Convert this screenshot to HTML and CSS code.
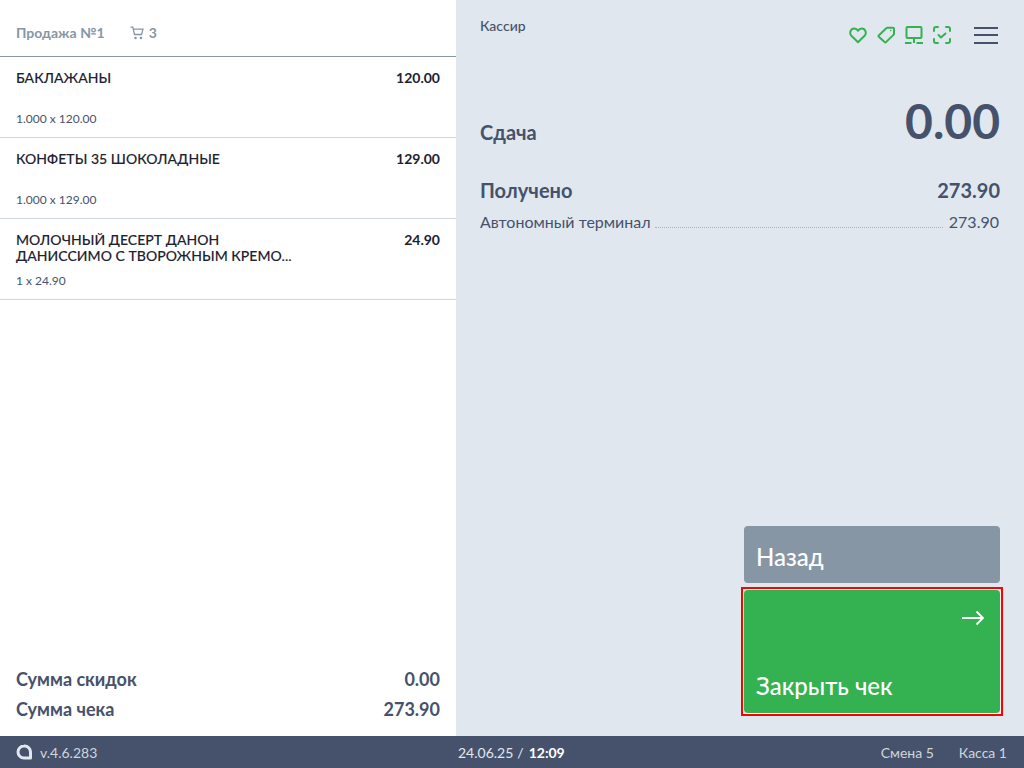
FILE: index.html
```html
<!DOCTYPE html>
<html lang="ru">
<head>
<meta charset="utf-8">
<title>Касса</title>
<link rel="stylesheet" href="styles.css">
</head>
<body>
<div class="app">
  <main class="main">
    <section class="left">
      <header class="sale-head">
        <span>Продажа №1</span>
        <span class="cart">
          <svg width="15" height="14" viewBox="0 0 15 14" fill="none" stroke="#8796a5" stroke-width="1.300"><path d="M.5 1.200h2.300l1.700 7.300h7l1.500-5.300H3.800"/><circle cx="5.500" cy="12" r="1.300" fill="#8796a5" stroke="none"/><circle cx="11" cy="12" r="1.300" fill="#8796a5" stroke="none"/></svg>
          3
        </span>
      </header>
      <div class="items">
        <article class="item">
          <div class="item-top"><div class="item-name">БАКЛАЖАНЫ</div><div class="item-price">120.00</div></div>
          <div class="item-qty">1.000 x 120.00</div>
        </article>
        <article class="item">
          <div class="item-top"><div class="item-name">КОНФЕТЫ 35 ШОКОЛАДНЫЕ</div><div class="item-price">129.00</div></div>
          <div class="item-qty">1.000 x 129.00</div>
        </article>
        <article class="item">
          <div class="item-top"><div class="item-name">МОЛОЧНЫЙ ДЕСЕРТ ДАНОН ДАНИССИМО С ТВОРОЖНЫМ КРЕМО...</div><div class="item-price">24.90</div></div>
          <div class="item-qty">1 x 24.90</div>
        </article>
      </div>
      <div class="totals">
        <div class="total-row"><span>Сумма скидок</span><span>0.00</span></div>
        <div class="total-row"><span>Сумма чека</span><span>273.90</span></div>
      </div>
    </section>
    <section class="right">
      <div class="top-row">
        <div class="cashier">Кассир</div>
        <div class="tools">
          <svg class="tool" width="18" height="18" viewBox="0 0 18 18" fill="none" stroke="#34b252" stroke-width="2" stroke-linejoin="round"><path d="M9 16.200 2.400 9.800C0 7.300 1.600 2.400 5.200 2.400 6.900 2.400 8.200 3.300 9 4.800 9.800 3.300 11.100 2.400 12.800 2.400 16.400 2.400 18 7.300 15.600 9.800z"/></svg>
          <svg class="tool" width="18" height="18" viewBox="0 0 18 18" fill="none" stroke="#34b252" stroke-width="2" stroke-linejoin="round"><path d="M1.500 9.800 9.500 2a1 1 0 0 1 .7-.3h5.800a1 1 0 0 1 1 1v5.200a1 1 0 0 1-.3.7l-7.700 7.500a1 1 0 0 1-1.400 0l-5.800-5.300a1.300 1.300 0 0 1-.3-1z"/><circle cx="13.800" cy="4.500" r=".8" fill="#34b252" stroke="none"/></svg>
          <svg class="tool" width="18" height="18" viewBox="0 0 18 18" fill="none" stroke="#34b252" stroke-width="2"><rect x="1.500" y="1" width="15" height="11" rx="1"/><path d="M9 12v5M0 17h6.500M11.500 17H18"/></svg>
          <svg class="tool" width="18" height="18" viewBox="0 0 18 18" fill="none" stroke="#34b252" stroke-width="2" stroke-linecap="round" stroke-linejoin="round"><path d="M1 5V3a2 2 0 0 1 2-2h2M13 1h2a2 2 0 0 1 2 2v2M17 13v2a2 2 0 0 1-2 2h-2M5 17H3a2 2 0 0 1-2-2v-2M5.500 9l2.500 2.500 4.500-4"/></svg>
          <div class="burger"><span></span><span></span><span></span></div>
        </div>
      </div>
      <div class="change-row"><span class="change-label">Сдача</span><span class="change-value">0.00</span></div>
      <div class="received-row"><span>Получено</span><span>273.90</span></div>
      <div class="pay-row"><span>Автономный терминал</span><span class="dots"></span><span>273.90</span></div>
      <div class="actions">
        <button class="btn btn-back" type="button">Назад</button>
        <button class="btn btn-close" type="button">
          <svg class="arrow" width="24" height="16" viewBox="0 0 24 16" fill="none" stroke="#fff" stroke-width="1.800"><path d="M1 8h21M15.500 1.500 22 8l-6.500 6.500"/></svg>
          <span>Закрыть чек</span>
        </button>
      </div>
    </section>
  </main>
  <footer class="bar">
    <div class="bar-left">
      <svg width="16" height="16" viewBox="0 0 16 16" fill="none" stroke="#e0e7ef" stroke-width="3"><path d="M8 2a6 6 0 1 0 0 12h6.500V8A6 6 0 0 0 8 2z" stroke-linejoin="round"/></svg>
      <span>v.4.6.283</span>
    </div>
    <div class="bar-center">24.06.25<span class="slash">/</span><b>12:09</b></div>
    <div class="bar-right"><span>Смена 5</span><span>Касса 1</span></div>
  </footer>
</div>
</body>
</html>
```
FILE: styles.css
```css
* { box-sizing: border-box; }
html, body { margin: 0; height: 100%; }
body { font-family: Lato, "Noto Sans", sans-serif; color: #46526b; }
.app { width: 1024px; height: 768px; display: flex; flex-direction: column; overflow: hidden; }
.main { flex: 1; display: flex; min-height: 0; }
.left { width: 456px; background: #fff; display: flex; flex-direction: column; }
.sale-head { height: 57px; padding: 9px 16px 0; display: flex; align-items: center; gap: 25px; border-bottom: 1px solid #8796a5; font-size: 14px; font-weight: 700; color: #8796a5; }
.cart { display: flex; align-items: center; gap: 4px; }
.items { flex: 1; }
.item { height: 81px; padding: 13px 16px 0; border-bottom: 1px solid #ced6de; position: relative; }
.item-top { display: flex; justify-content: space-between; gap: 60px; }
.item-name { font-size: 14px; line-height: 16px; font-weight: 500; letter-spacing: 0.04px; color: #1b2230; max-width: 300px; -webkit-text-stroke: 0.1px #1b2230; }
.item-price { font-size: 14px; line-height: 16px; font-weight: 700; color: #1b2230; }
.item-qty { position: absolute; left: 16px; bottom: 10px; font-size: 12px; line-height: 16px; color: #46526b; }
.totals { padding: 0 16px 16px; display: flex; flex-direction: column; gap: 8px; }
.total-row { display: flex; justify-content: space-between; font-size: 18px; line-height: 22px; font-weight: 700; color: #46526b; }
.right { flex: 1; background: #e0e7ef; padding: 17px 24px 23px; display: flex; flex-direction: column; }
.top-row { display: flex; justify-content: space-between; align-items: flex-start; }
.cashier { font-size: 14px; line-height: 18px; font-weight: 500; color: #46526b; }
.tools { display: flex; align-items: center; gap: 10px; margin-top: 9px; margin-right: 2px; }
.burger { width: 24px; height: 17px; margin-left: 13px; display: flex; flex-direction: column; justify-content: space-between; }
.burger span { height: 2px; background: #46526b; }
.change-row { display: flex; justify-content: space-between; align-items: baseline; margin-top: 48px; }
.change-label { font-size: 20px; font-weight: 700; position: relative; top: 1px; }
.change-value { font-size: 48px; line-height: 58px; font-weight: 700; }
.received-row { display: flex; justify-content: space-between; margin-top: 28px; font-size: 20px; line-height: 24px; font-weight: 700; }
.pay-row { display: flex; align-items: baseline; gap: 4px; margin-top: 10px; font-size: 16px; line-height: 20px; color: #46526b; padding-right: 1px; }
.dots { flex: 1; border-bottom: 1px dotted #a9b5c1; margin-right: 2px; }
.actions { margin-top: auto; margin-left: auto; width: 256px; display: flex; flex-direction: column; gap: 7px; }
.btn { border: 0; border-radius: 4px; color: #fff; font: 500 24px/30px Lato, "Noto Sans", sans-serif; text-align: left; padding: 0 12px; }
.btn-back { height: 57px; background: #8796a5; padding-top: 4px; }
.btn-close { height: 123px; background: #34b252; position: relative; display: flex; flex-direction: column; justify-content: space-between; padding: 20px 12px 12px; }
.btn-close::after { content: ""; position: absolute; inset: -3px; border: 2px solid #ff0000; box-shadow: inset 0 0 0 1px #f4eef2; }
.arrow { align-self: flex-end; margin-right: 3px; }
.bar { height: 32px; background: #46526b; color: #ced6de; display: flex; align-items: center; justify-content: space-between; padding: 0 17px 0 16px; font-size: 14px; position: relative; }
.bar-left { display: flex; align-items: center; gap: 8px; }
.bar-center { position: absolute; left: 458px; color: #e0e7ef; }
.bar-center b { color: #fff; }
.slash { margin: 0 5px 0 4px; }
.bar-right { display: flex; gap: 25px; }
```
